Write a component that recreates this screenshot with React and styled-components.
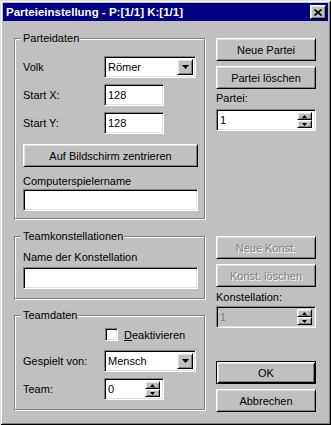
import React from 'react';
import styled, { createGlobalStyle, css } from 'styled-components';

const Global = createGlobalStyle`
  html, body { margin: 0; padding: 0; background: #c0c0c0; }
  body { font-family: "Liberation Sans", Arial, sans-serif; font-size: 11px; color: #000; }
  * { box-sizing: border-box; }
`;

const sunken = css`
  border: 1px solid;
  border-color: #808080 #fff #fff #808080;
  box-shadow: inset 1px 1px 0 #000, inset -1px -1px 0 #dfdfdf;
`;
const raised = css`
  border: 1px solid;
  border-color: #fff #000 #000 #fff;
  box-shadow: inset 1px 1px 0 #dfdfdf, inset -1px -1px 0 #808080;
`;

const Window = styled.div`
  width: 331px;
  height: 425px;
  padding: 3px;
  background: #c0c0c0;
  box-shadow: inset 1px 1px 0 #dfdfdf, inset -1px -1px 0 #000,
    inset 2px 2px 0 #fff, inset -2px -2px 0 #808080;
  display: flex;
  flex-direction: column;
`;

const TitleBar = styled.div`
  height: 18px;
  background: #000080;
  color: #fff;
  font-weight: bold;
  font-size: 11.5px;
  display: flex;
  align-items: center;
  justify-content: space-between;
  padding: 0 2px 0 3px;
`;

const CloseButton = styled.div`
  width: 16px;
  height: 14px;
  ${raised};
  background: #c0c0c0;
  display: flex;
  align-items: center;
  justify-content: center;
`;

const Body = styled.div`
  display: flex;
  gap: 11px;
  padding: 17px 0 0 11px;
`;

const LeftCol = styled.div`
  width: 191px;
  display: flex;
  flex-direction: column;
`;

const RightCol = styled.div`
  width: 100px;
  display: flex;
  flex-direction: column;
`;

const Group = styled.div`
  position: relative;
  border: 1px solid #808080;
  box-shadow: 1px 1px 0 #fff, inset 1px 1px 0 #fff;
  height: ${p => p.$h}px;
  margin-top: ${p => p.$mt || 0}px;
  padding: ${p => p.$pt}px 6px 0 8px;
  display: flex;
  flex-direction: column;
`;

const Legend = styled.span`
  position: absolute;
  top: -7px;
  left: 6px;
  padding: 0 1px 0 2px;
  background: #c0c0c0;
  line-height: 13px;
`;

const Row = styled.div`
  display: flex;
  align-items: center;
  margin-top: ${p => p.$mt || 0}px;
`;

const Label = styled.div`
  width: ${p => p.$w || 81}px;
  line-height: 13px;
  margin-top: ${p => p.$mt || 0}px;
  white-space: nowrap;
`;

const Field = styled.div`
  ${sunken};
  width: ${p => (p.$w ? `${p.$w}px` : '100%')};
  height: ${p => p.$h || 22}px;
  background: ${p => (p.$disabled ? '#c0c0c0' : '#fff')};
  color: ${p => (p.$disabled ? '#808080' : '#000')};
  display: flex;
  align-items: center;
  padding: 2px 2px 2px 3px;
  margin-top: ${p => p.$mt || 0}px;
  flex-shrink: 0;
`;

const FieldText = styled.span`
  flex: 1;
  line-height: 13px;
`;

const DropButton = styled.div`
  ${raised};
  background: #c0c0c0;
  width: 16px;
  height: 100%;
  display: flex;
  align-items: center;
  justify-content: center;
`;

const SpinStack = styled.div`
  width: 15px;
  height: 100%;
  display: flex;
  flex-direction: column;
  margin-right: 1px;
`;

const SpinHalf = styled.div`
  ${raised};
  background: #c0c0c0;
  flex: 1;
  display: flex;
  align-items: center;
  justify-content: center;
`;

const Button = styled.div`
  ${p => (p.$default
    ? css`
        border: 1px solid #000;
        box-shadow: inset 1px 1px 0 #fff, inset -1px -1px 0 #000,
          inset 2px 2px 0 #dfdfdf, inset -2px -2px 0 #808080;
      `
    : raised)};
  background: #c0c0c0;
  width: ${p => (p.$w ? `${p.$w}px` : '100%')};
  height: 23px;
  display: flex;
  align-items: center;
  justify-content: center;
  margin-top: ${p => p.$mt || 0}px;
  color: ${p => (p.$disabled ? '#808080' : '#000')};
  text-shadow: ${p => (p.$disabled ? '1px 1px 0 #fff' : 'none')};
  flex-shrink: 0;
`;

const CheckBox = styled.div`
  ${sunken};
  width: 13px;
  height: 13px;
  background: #fff;
  margin: 0 6px 0 1px;
`;

const Mnemonic = styled.span`
  text-decoration: underline;
`;

const Tri = ({ up, size = 7 }) => {
  const w = size;
  const h = Math.ceil(size / 2);
  return (
    <svg width={w} height={h} viewBox={`0 0 ${w} ${h}`} style={{ display: 'block' }}>
      <polygon
        points={up ? `0,${h} ${w / 2},0 ${w},${h}` : `0,0 ${w},0 ${w / 2},${h}`}
        fill="#000"
      />
    </svg>
  );
};

const Combo = ({ value, w }) => (
  <Field $w={w}>
    <FieldText>{value}</FieldText>
    <DropButton>
      <Tri size={7} />
    </DropButton>
  </Field>
);

const Spin = ({ value, w, disabled, mt }) => (
  <Field $w={w} $disabled={disabled} $mt={mt}>
    <FieldText>{value}</FieldText>
    <SpinStack>
      <SpinHalf><Tri up size={5} /></SpinHalf>
      <SpinHalf><Tri size={5} /></SpinHalf>
    </SpinStack>
  </Field>
);

export default function App() {
  return (
    <>
      <Global />
      <Window>
        <TitleBar>
          <span>Parteieinstellung - P:[1/1] K:[1/1]</span>
          <CloseButton>
            <svg width="8" height="7" viewBox="0 0 8 7">
              <path d="M0.5 0.5 L7.5 6.5 M7.5 0.5 L0.5 6.5" stroke="#000" strokeWidth="1.6" />
            </svg>
          </CloseButton>
        </TitleBar>
        <Body>
          <LeftCol>
            <Group $h={181} $pt={17}>
              <Legend>Parteidaten</Legend>
              <Row>
                <Label>Volk</Label>
                <Combo value="Römer" w={92} />
              </Row>
              <Row $mt={6}>
                <Label>Start X:</Label>
                <Field $w={60}><FieldText>128</FieldText></Field>
              </Row>
              <Row $mt={6}>
                <Label>Start Y:</Label>
                <Field $w={60}><FieldText>128</FieldText></Field>
              </Row>
              <Button $w={175} $mt={10}>Auf Bildschirm zentrieren</Button>
              <Label $mt={8}>Computerspielername</Label>
              <Field $w={175} $mt={1} />
            </Group>
            <Group $h={63} $pt={14} $mt={17}>
              <Legend>Teamkonstellationen</Legend>
              <Label>Name der Konstellation</Label>
              <Field $w={175} $mt={3} />
            </Group>
            <Group $h={95} $pt={12} $mt={16}>
              <Legend>Teamdaten</Legend>
              <Row>
                <Label />
                <CheckBox />
                <span><Mnemonic>D</Mnemonic>eaktivieren</span>
              </Row>
              <Row $mt={9}>
                <Label>Gespielt von:</Label>
                <Combo value="Mensch" w={92} />
              </Row>
              <Row $mt={6}>
                <Label>Team:</Label>
                <Spin value="0" w={60} />
              </Row>
            </Group>
          </LeftCol>
          <RightCol>
            <Button>Neue Partei</Button>
            <Button $mt={5}>Partei löschen</Button>
            <Label $mt={3}>Partei:</Label>
            <Spin value="1" mt={4} />
            <Button $mt={105} $disabled>Neue Konst.</Button>
            <Button $mt={5} $disabled>Konst. löschen</Button>
            <Label $mt={4}>Konstellation:</Label>
            <Spin value="1" mt={2} disabled />
            <Button $mt={33} $default>OK</Button>
            <Button $mt={5}>Abbrechen</Button>
          </RightCol>
        </Body>
      </Window>
    </>
  );
}
